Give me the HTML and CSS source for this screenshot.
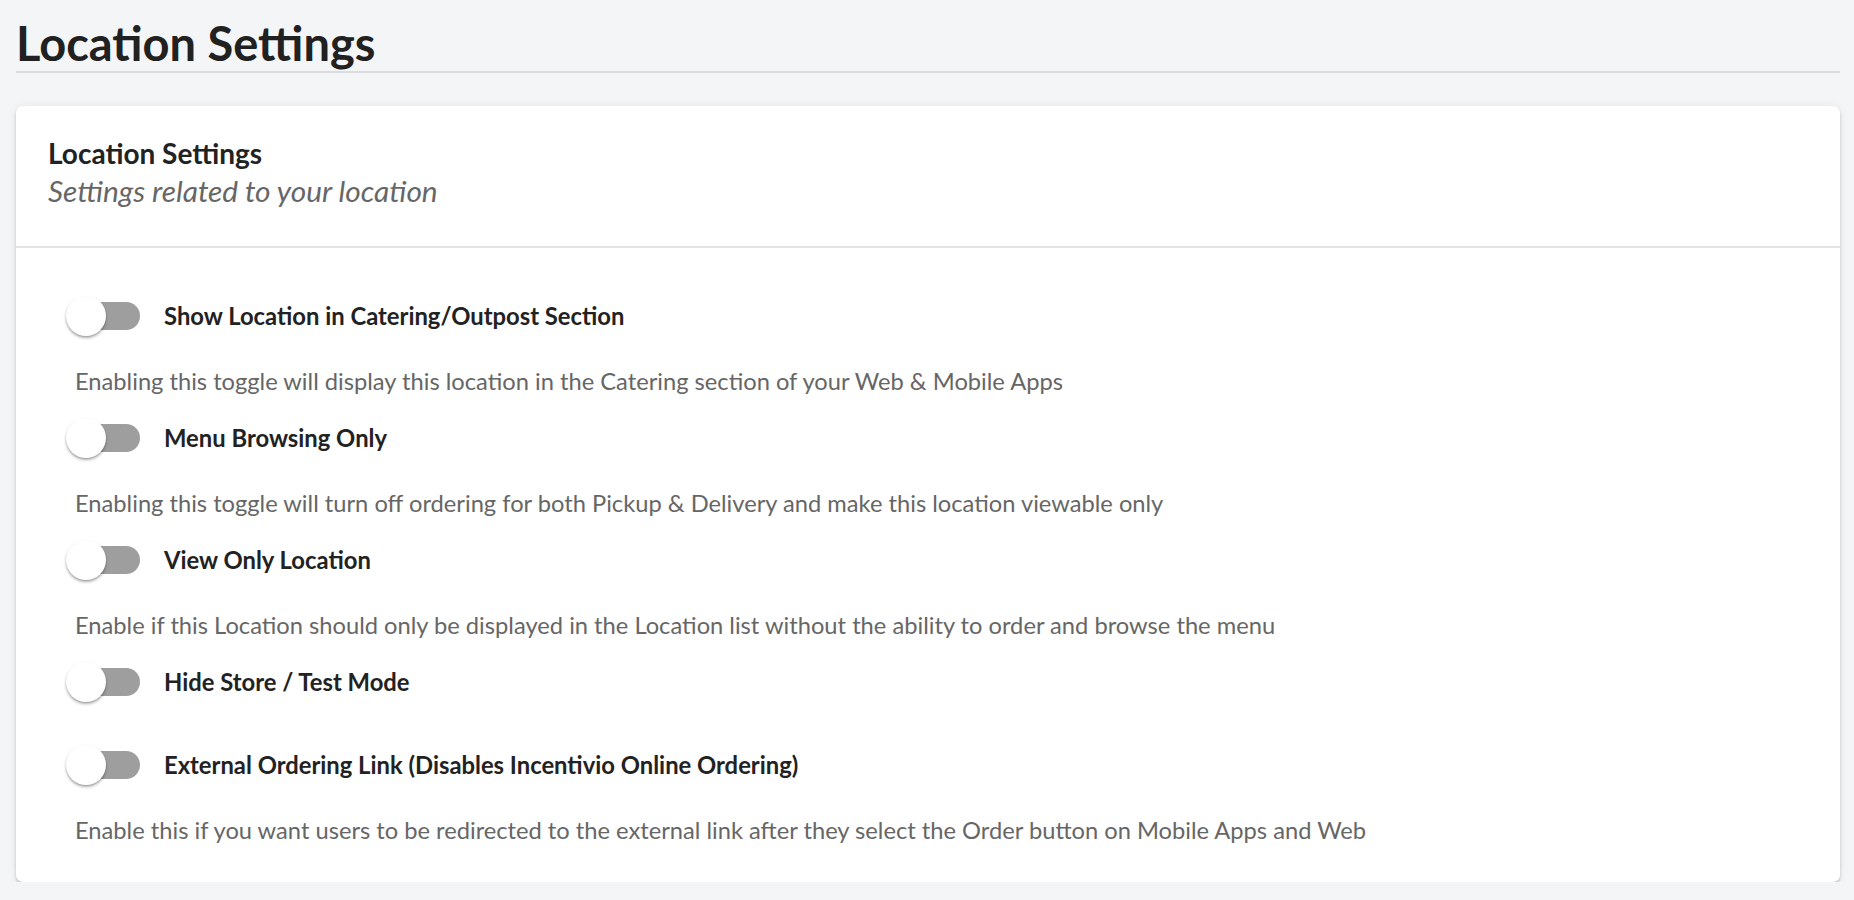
FILE: index.html
```html
<!DOCTYPE html>
<html lang="en">
<head>
<meta charset="utf-8">
<title>Location Settings</title>
<link rel="stylesheet" href="styles.css">
</head>
<body>
<div class="page">
  <h1 class="page-title">Location Settings</h1>
  <section class="card">
    <header class="card-header">
      <h2 class="card-title">Location Settings</h2>
      <p class="card-subtitle">Settings related to your location</p>
    </header>
    <div class="card-body">
      <div class="setting">
        <div class="setting-row">
          <span class="toggle"><span class="track"><span class="knob"></span></span></span>
          <span class="setting-label">Show Location in Catering/Outpost Section</span>
        </div>
        <p class="setting-desc">Enabling this toggle will display this location in the Catering section of your Web &amp; Mobile Apps</p>
      </div>
      <div class="setting">
        <div class="setting-row">
          <span class="toggle"><span class="track"><span class="knob"></span></span></span>
          <span class="setting-label">Menu Browsing Only</span>
        </div>
        <p class="setting-desc">Enabling this toggle will turn off ordering for both Pickup &amp; Delivery and make this location viewable only</p>
      </div>
      <div class="setting">
        <div class="setting-row">
          <span class="toggle"><span class="track"><span class="knob"></span></span></span>
          <span class="setting-label">View Only Location</span>
        </div>
        <p class="setting-desc">Enable if this Location should only be displayed in the Location list without the ability to order and browse the menu</p>
      </div>
      <div class="setting">
        <div class="setting-row">
          <span class="toggle"><span class="track"><span class="knob"></span></span></span>
          <span class="setting-label">Hide Store / Test Mode</span>
        </div>
      </div>
      <div class="setting">
        <div class="setting-row">
          <span class="toggle"><span class="track"><span class="knob"></span></span></span>
          <span class="setting-label">External Ordering Link (Disables Incentivio Online Ordering)</span>
        </div>
        <p class="setting-desc">Enable this if you want users to be redirected to the external link after they select the Order button on Mobile Apps and Web</p>
      </div>
    </div>
  </section>
</div>
</body>
</html>
```

FILE: styles.css
```css
html, body {
  margin: 0;
  padding: 0;
  background: #f4f5f7;
  font-family: Lato, "Liberation Sans", sans-serif;
  color: #222222;
}

.page {
  padding: 16px 14px 0 16px;
}

.page-title {
  margin: 0;
  font-size: 47px;
  line-height: 55px;
  font-weight: 700;
  color: #212121;
  border-bottom: 2px solid #dcdde0;
}

.card {
  margin-top: 33px;
  background: #ffffff;
  border-radius: 7px;
  box-shadow: 0 2px 3px rgba(0, 0, 0, 0.22), 0 1px 12px rgba(0, 0, 0, 0.06);
}

.card-header {
  padding: 29px 32px 36px 32px;
  border-bottom: 2px solid #e3e4e6;
}

.card-title {
  margin: 0;
  font-size: 28px;
  line-height: 37px;
  font-weight: 700;
  color: #222222;
}

.card-subtitle {
  margin: 0;
  font-size: 29.8px;
  line-height: 38px;
  font-style: italic;
  color: #666666;
}

.card-body {
  padding: 48px 32px 33px 50px;
}

.setting {
  padding-bottom: 18px;
}

.setting:last-child {
  padding-bottom: 0;
}

.setting-row {
  display: flex;
  align-items: center;
  height: 40px;
  margin-bottom: 25px;
}

.toggle {
  display: flex;
  align-items: center;
  width: 74px;
  height: 40px;
  flex: none;
}

.track {
  display: flex;
  align-items: center;
  width: 68px;
  height: 28px;
  margin-left: 6px;
  border-radius: 14px;
  background: #9e9e9e;
}

.knob {
  width: 40px;
  height: 40px;
  margin-left: -6px;
  border-radius: 50%;
  background: #ffffff;
  box-shadow: 0 2px 3px rgba(0, 0, 0, 0.3), 0 1px 1px rgba(0, 0, 0, 0.12);
  flex: none;
}

.setting-label {
  margin-left: 24px;
  font-size: 23.8px;
  font-weight: 700;
  color: #222222;
}

.setting-desc {
  margin: 0;
  padding: 2px 0 0 9px;
  font-size: 23.7px;
  line-height: 37px;
  color: #666666;
}
```
